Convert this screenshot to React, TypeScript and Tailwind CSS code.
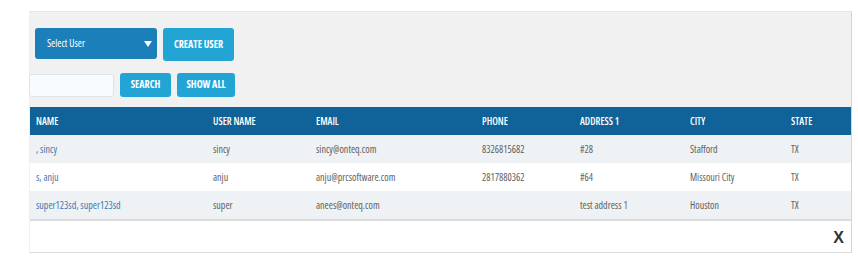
import { useState } from 'react'

type User = {
  name: string
  userName: string
  email: string
  phone: string
  address: string
  city: string
  state: string
}

const users: User[] = [
  { name: ', sincy', userName: 'sincy', email: 'sincy@onteq.com', phone: '8326815682', address: '#28', city: 'Stafford', state: 'TX' },
  { name: 's, anju', userName: 'anju', email: 'anju@prcsoftware.com', phone: '2817880362', address: '#64', city: 'Missouri City', state: 'TX' },
  { name: 'super123sd, super123sd', userName: 'super', email: 'anees@onteq.com', phone: '', address: 'test address 1', city: 'Houston', state: 'TX' },
]

const columns = [
  { label: 'NAME', width: 'w-[177px]' },
  { label: 'USER NAME', width: 'w-[103px]' },
  { label: 'EMAIL', width: 'w-[166px]' },
  { label: 'PHONE', width: 'w-[98px]' },
  { label: 'ADDRESS 1', width: 'w-[110px]' },
  { label: 'CITY', width: 'w-[101px]' },
  { label: 'STATE', width: 'w-[65px]' },
]

export default function App() {
  const [search, setSearch] = useState('')

  return (
    <div className="min-h-screen bg-white pl-[29px] pt-[11px] [font-family:'Open_Sans',sans-serif] [font-stretch:75%]">
      <div className="w-[823px] bg-[#f1f1f1] border-t border-[#e6e6e6] border-r border-r-[#d4d4d4]">
        {/* Controls */}
        <div className="pt-[16px] pb-[10px]">
          <div className="flex items-start gap-[6px] pl-[6px]">
            <div className="w-[122px] h-[31px] rounded-[3px] bg-[#1b7fba] flex items-center justify-between pl-[12px] pr-[5px] text-white text-[10px]">
              <span>Select User</span>
              <svg width="8" height="6" viewBox="0 0 8 6"><path d="M0 0h8L4 6z" fill="white" /></svg>
            </div>
            <button className="w-[71px] h-[33px] rounded-[3px] bg-[#22a5d5] text-white text-[10px] font-bold">
              CREATE USER
            </button>
          </div>
          <div className="flex items-center gap-[6px] mt-[11px]">
            <input
              value={search}
              onChange={e => setSearch(e.target.value)}
              className="w-[85px] h-[23px] mt-[2px] rounded-[3px] bg-[#f9fcff] border border-[#dfe3e6] outline-none px-2 text-[10px]"
            />
            <button className="w-[51px] h-[24px] rounded-[3px] bg-[#22a5d5] text-white text-[10px] font-bold">
              SEARCH
            </button>
            <button className="w-[58px] h-[24px] rounded-[3px] bg-[#22a5d5] text-white text-[10px] font-bold">
              SHOW ALL
            </button>
          </div>
        </div>

        {/* Table */}
        <div className="ml-[1px]">
          <div className="flex h-[28px] items-center bg-[#0f6399] text-white text-[10px] font-semibold">
            {columns.map(c => (
              <div key={c.label} className={`${c.width} pl-[6px]`}>{c.label}</div>
            ))}
          </div>
          {users.map((u, i) => (
            <div
              key={u.email}
              className={`flex h-[28px] items-center text-[10px] text-[#606060] ${i % 2 === 0 ? 'bg-[#eff2f4]' : 'bg-white'}`}
            >
              <div className="w-[177px] pl-[6px] text-[#3b79b0]">{u.name}</div>
              <div className="w-[103px] pl-[6px]">{u.userName}</div>
              <div className="w-[166px] pl-[6px]">{u.email}</div>
              <div className="w-[98px] pl-[6px]">{u.phone}</div>
              <div className="w-[110px] pl-[6px]">{u.address}</div>
              <div className="w-[101px] pl-[6px]">{u.city}</div>
              <div className="w-[65px] pl-[6px]">{u.state}</div>
            </div>
          ))}
          <div className="h-[34px] bg-white border-t-2 border-[#dcdcdc] border-b border-b-[#dcdcdc] flex items-end justify-end pr-[7px] pb-[6px]">
            <span className="text-[16px] font-bold leading-none text-[#333] [font-family:'Liberation_Sans',sans-serif] [font-stretch:100%]">X</span>
          </div>
        </div>
      </div>
    </div>
  )
}
